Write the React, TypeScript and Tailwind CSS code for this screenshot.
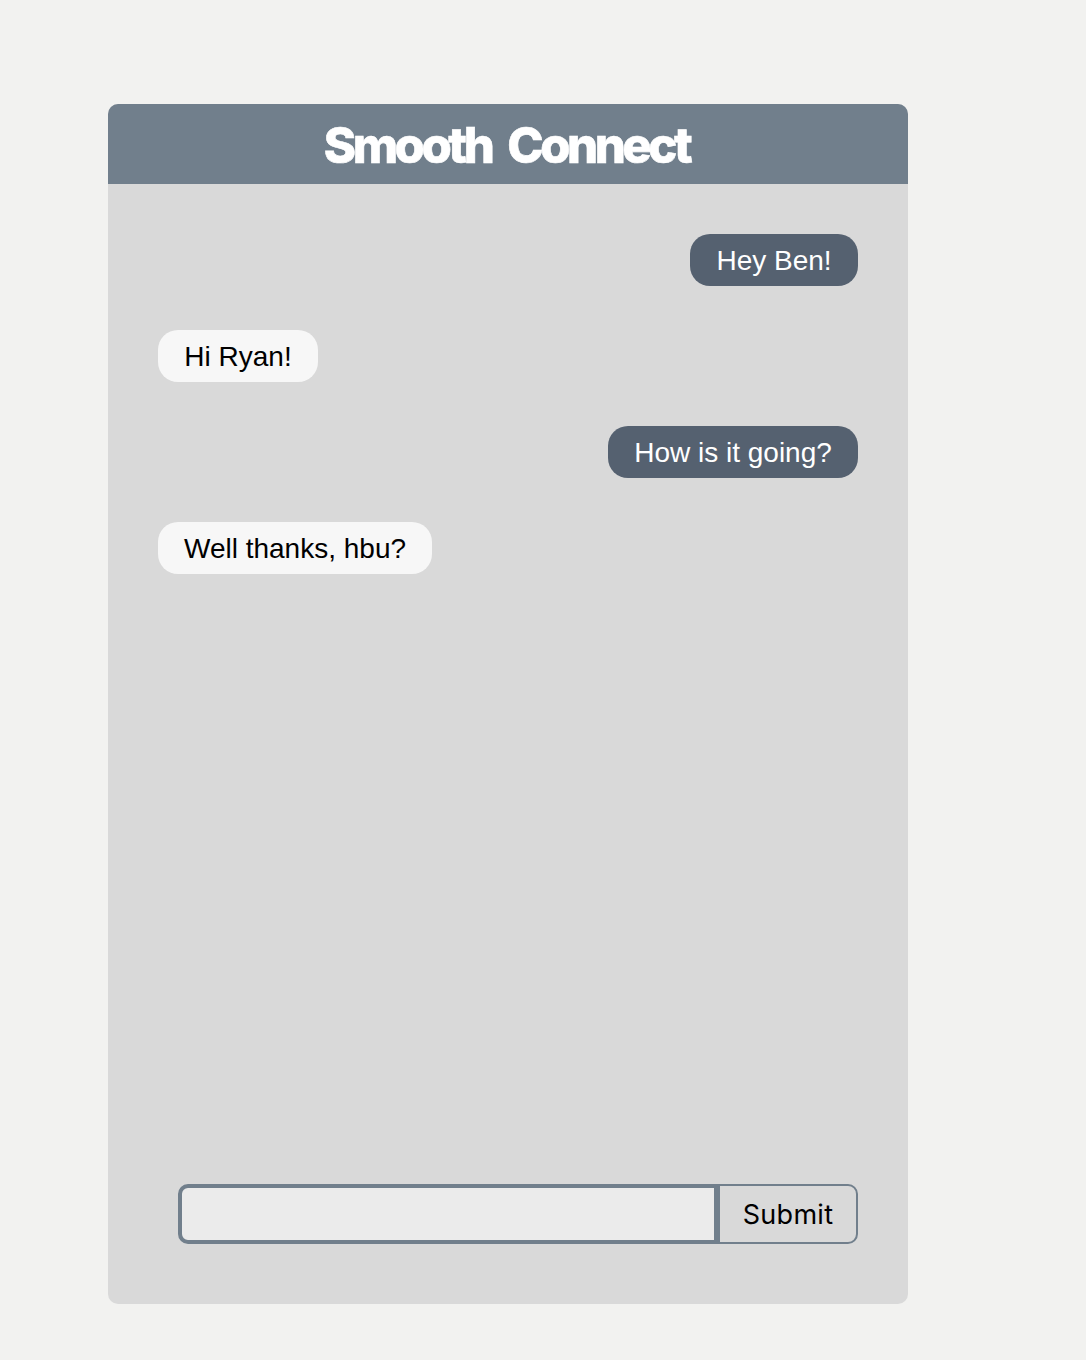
const messages = [
  { text: "Hey Ben!", own: true, size: "w-[168px]" },
  { text: "Hi Ryan!", own: false, size: "w-[160px]" },
  { text: "How is it going?", own: true, size: "w-[250px]" },
  { text: "Well thanks, hbu?", own: false, size: "w-[274px]" },
];

export default function App() {
  return (
    <div className="h-[1360px] overflow-hidden bg-[#f2f2f0] pt-[104px] pl-[108px] font-['Liberation_Sans',Arial,sans-serif]">
      <main className="flex h-[1200px] w-[800px] flex-col overflow-hidden rounded-[10px] bg-[#d9d9d9]">
        <header className="flex h-20 shrink-0 items-center justify-center bg-[#717f8c]">
          <h1 className="flex gap-4 pt-0.5 pr-[3px] font-['Inter',sans-serif] text-[49px] leading-none font-extrabold whitespace-nowrap text-white [-webkit-text-stroke:0.6px_white]">
            <span className="tracking-[-3.5px]">Smooth</span>
            <span className="tracking-[-3.5px]">Connect</span>
          </h1>
        </header>
        <section className="flex grow flex-col gap-11 px-[50px] pt-[50px]">
          {messages.map((m) => (
            <div
              key={m.text}
              className={`flex h-[52px] items-center justify-center rounded-[20px] pt-0.5 text-[28px] leading-8 whitespace-nowrap ${m.size} ${m.own ? "self-end bg-[#556170] text-white" : "self-start bg-[#f7f7f7] text-black"}`}
            >
              {m.text}
            </div>
          ))}
        </section>
        <form className="mb-[60px] ml-[70px] flex h-[60px] w-[680px] shrink-0">
          <input className="w-[540px] rounded-l-[10px] border-4 border-[#717f8c] bg-[#ebebeb] outline-none" />
          <button type="button" className="w-[140px] rounded-r-[10px] border-2 border-[#717f8c] pt-0.5 font-['Inter',sans-serif] text-[27px] tracking-[0.3px] text-black">
            Submit
          </button>
        </form>
      </main>
    </div>
  );
}
